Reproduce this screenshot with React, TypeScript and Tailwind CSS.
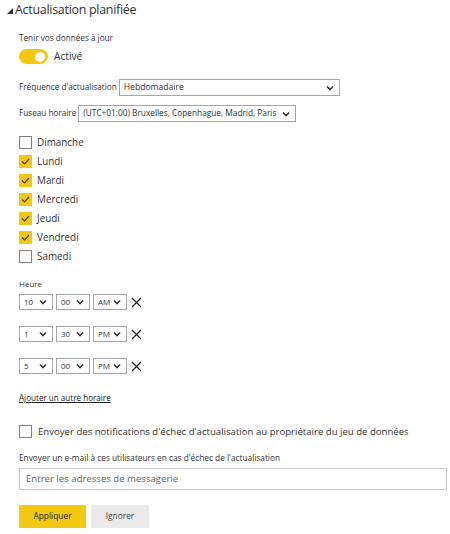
import React from "react";

const FONT = { fontFamily: '"Open Sans", "Noto Sans", sans-serif' };

function Chevron() {
  return (
    <svg width="8" height="6" viewBox="0 0 8 6" className="shrink-0">
      <path d="M1 1.5 L4 4.5 L7 1.5" fill="none" stroke="#333" strokeWidth="1.6" />
    </svg>
  );
}

function Select({ value, className, textClass = "text-[8.6px]" }: { value: string; className: string; textClass?: string }) {
  return (
    <div className={`flex items-center justify-between border border-[#a6a6a6] bg-white pl-[4px] pr-[5px] ${className}`}>
      <span className={`${textClass} text-[#333] leading-none whitespace-nowrap`}>{value}</span>
      <Chevron />
    </div>
  );
}

function Check({ checked }: { checked: boolean }) {
  return checked ? (
    <div className="w-[13px] h-[13px] bg-[#f2c811] flex items-center justify-center shrink-0">
      <svg width="9" height="7" viewBox="0 0 9 7">
        <path d="M1 3.5 L3.5 6 L8 1" fill="none" stroke="#4a3f0a" strokeWidth="1.2" />
      </svg>
    </div>
  ) : (
    <div className="w-[13px] h-[13px] border border-[#808080] bg-white shrink-0" />
  );
}

function Cross() {
  return (
    <svg width="11" height="11" viewBox="0 0 11 11" className="shrink-0">
      <path d="M1 1 L10 10 M10 1 L1 10" stroke="#222" strokeWidth="1.3" />
    </svg>
  );
}

const days: [string, boolean][] = [
  ["Dimanche", false],
  ["Lundi", true],
  ["Mardi", true],
  ["Mercredi", true],
  ["Jeudi", true],
  ["Vendredi", true],
  ["Samedi", false],
];

const times: [string, string, string][] = [
  ["10", "00", "AM"],
  ["1", "30", "PM"],
  ["5", "00", "PM"],
];

export default function App() {
  return (
    <div className="w-[450px] h-[534px] bg-white text-[#333] overflow-hidden" style={FONT}>
      {/* Title */}
      <div className="flex items-center h-[19px] pl-[7px]">
        <svg width="6" height="6" viewBox="0 0 6 6" className="mt-[2px]">
          <path d="M6 0 L6 6 L0 6 Z" fill="#333" />
        </svg>
        <span className="ml-[2px] text-[12.5px] tracking-[-0.3px] leading-[19px] text-[#333]">Actualisation planifiée</span>
      </div>

      <div className="pl-[19px]">
        <div className="mt-[13px] text-[8.2px] leading-[12px]">Tenir vos données à jour</div>

        <div className="mt-[5px] flex items-center h-[15px]">
          <div className="w-[29px] h-[15px] rounded-full bg-[#f2c811] flex items-center justify-end pr-[3px]">
            <div className="w-[10px] h-[10px] rounded-full bg-white" />
          </div>
          <span className="ml-[6px] text-[10.2px] leading-[15px]">Activé</span>
        </div>

        <div className="mt-[15px] flex items-center h-[17px]">
          <span className="text-[8.2px] whitespace-nowrap">Fréquence d'actualisation</span>
          <Select value="Hebdomadaire" className="ml-[2px] w-[221px] h-[17px]" />
        </div>

        <div className="mt-[9px] flex items-center h-[17px]">
          <span className="text-[8.2px] whitespace-nowrap">Fuseau horaire</span>
          <Select value="(UTC+01:00) Bruxelles, Copenhague, Madrid, Paris" textClass="text-[8.3px]" className="ml-[2px] w-[218px] h-[17px]" />
        </div>

        <div className="mt-[14px] flex flex-col gap-[6px]">
          {days.map(([d, c]) => (
            <div key={d} className="flex items-center h-[13px]">
              <Check checked={c} />
              <span className="ml-[5px] text-[9.9px] leading-[13px]">{d}</span>
            </div>
          ))}
        </div>

        <div className="mt-[15px] text-[8px] leading-[11px]">Heure</div>

        <div className="mt-[5px] flex flex-col gap-[16px]">
          {times.map(([h, m, p], i) => (
            <div key={i} className="flex items-center h-[16px]">
              <Select value={h} className="w-[34px] h-[16px]" textClass="text-[8px]" />
              <Select value={m} className="ml-[3px] w-[34px] h-[16px]" textClass="text-[8px]" />
              <Select value={p} className="ml-[3px] w-[34px] h-[16px]" textClass="text-[8px]" />
              <div className="ml-[4px]">
                <Cross />
              </div>
            </div>
          ))}
        </div>

        <div className="mt-[18px] text-[8.1px] leading-[12px] underline text-[#222]">Ajouter un autre horaire</div>

        <div className="mt-[21px] flex items-center h-[13px]">
          <Check checked={false} />
          <span className="ml-[6px] text-[9.6px] leading-[13px] whitespace-nowrap">
            Envoyer des notifications d'échec d'actualisation au propriétaire du jeu de données
          </span>
        </div>

        <div className="mt-[14px] text-[8.3px] leading-[12px]">
          Envoyer un e-mail à ces utilisateurs en cas d'échec de l'actualisation
        </div>

        <div className="mt-[4px] w-[428px] h-[22px] border border-[#c8c8c8] flex items-center pl-[6px]">
          <span className="text-[9.6px] text-[#666]">Entrer les adresses de messagerie</span>
        </div>

        <div className="mt-[15px] flex gap-[5px]">
          <div className="w-[67px] h-[23px] bg-[#f2c811] flex items-center justify-center text-[8.4px] text-[#222]">
            Appliquer
          </div>
          <div className="w-[58px] h-[23px] bg-[#eaeaea] flex items-center justify-center text-[8.4px] text-[#444]">
            Ignorer
          </div>
        </div>
      </div>
    </div>
  );
}
